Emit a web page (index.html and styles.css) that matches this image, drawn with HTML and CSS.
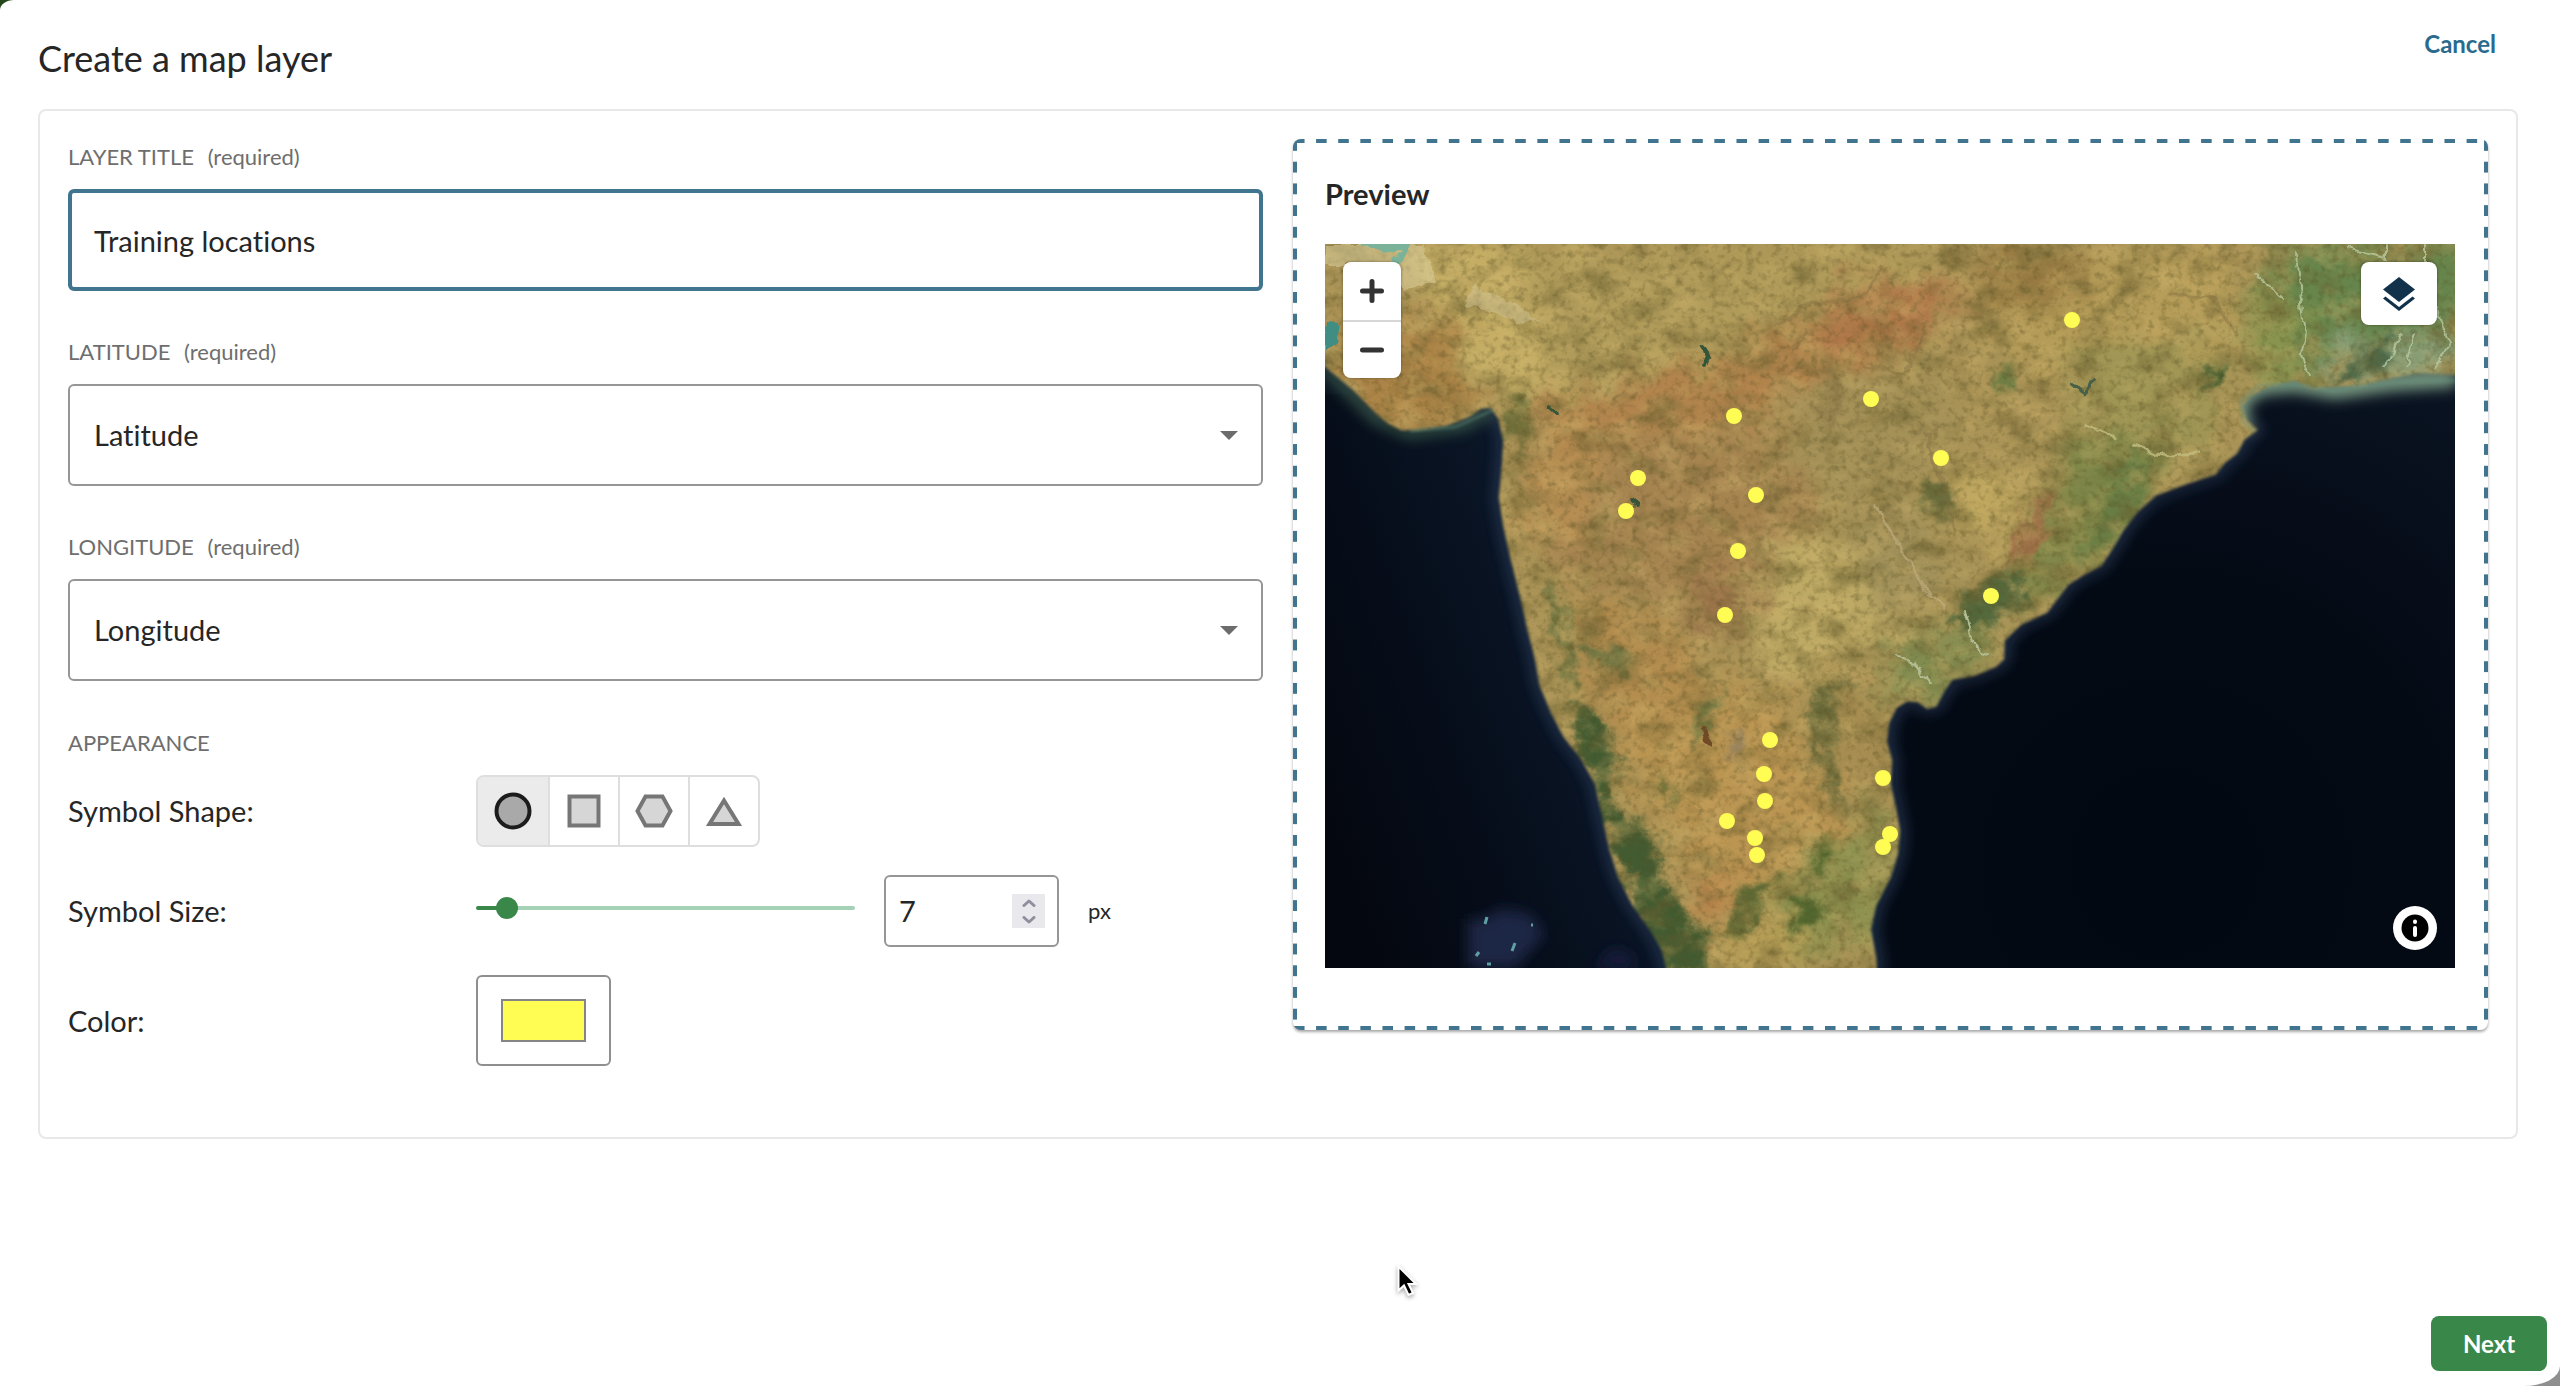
FILE: index.html
```html
<!DOCTYPE html>
<html lang="en">
<head>
<meta charset="utf-8">
<meta name="viewport" content="width=device-width, initial-scale=1">
<title>Create a map layer</title>
<link rel="stylesheet" href="styles.css">
</head>
<body>
<div class="dialog">
  <header class="header">
    <h1 class="title">Create a map layer</h1>
    <a class="cancel" href="#">Cancel</a>
  </header>

  <main class="panel">
    <form class="form" id="layer-form">
      <div class="field">
        <label class="caption" for="layer-title">LAYER TITLE <span class="required">(required)</span></label>
        <input class="control control-active" id="layer-title" type="text" value="Training locations">
      </div>
      <div class="field">
        <label class="caption" for="latitude">LATITUDE <span class="required">(required)</span></label>
        <div class="select-wrap">
          <select class="control" id="latitude"><option>Latitude</option></select>
          <svg class="caret" viewBox="0 0 18 9"><path d="M0 0h18L9 9z"/></svg>
        </div>
      </div>
      <div class="field">
        <label class="caption" for="longitude">LONGITUDE <span class="required">(required)</span></label>
        <div class="select-wrap">
          <select class="control" id="longitude"><option>Longitude</option></select>
          <svg class="caret" viewBox="0 0 18 9"><path d="M0 0h18L9 9z"/></svg>
        </div>
      </div>

      <section class="appearance">
        <h2 class="caption">APPEARANCE</h2>
        <div class="row" role="radiogroup" aria-labelledby="shape-label">
          <span class="row-label" id="shape-label">Symbol Shape:</span>
          <div class="shapes">
            <label class="shape"><input type="radio" name="shape" aria-label="Circle" checked>
              <svg viewBox="0 0 40 40"><circle cx="20" cy="20" r="16.5"/></svg></label>
            <label class="shape"><input type="radio" name="shape" aria-label="Square">
              <svg viewBox="0 0 40 40"><path d="M5.500 5.500h29v29h-29z"/></svg></label>
            <label class="shape"><input type="radio" name="shape" aria-label="Hexagon">
              <svg viewBox="0 0 40 40"><path d="M11.500 5.500h17L36.500 20l-8 14.500h-17L3.500 20z"/></svg></label>
            <label class="shape"><input type="radio" name="shape" aria-label="Triangle">
              <svg viewBox="0 0 40 40"><path d="M20 9.500L34.500 33h-29z"/></svg></label>
          </div>
        </div>
        <div class="row">
          <label class="row-label" for="size">Symbol Size:</label>
          <input class="slider" id="size" type="range" min="1" max="110" value="7">
          <div class="number">
            <input class="number-input" type="number" value="7" aria-label="Symbol size in pixels">
            <div class="spinner">
              <button class="step" type="button" aria-label="Increase"><svg viewBox="0 0 14 8"><path d="M2 6.500L7 2l5 4.500"/></svg></button>
              <button class="step" type="button" aria-label="Decrease"><svg viewBox="0 0 14 8"><path d="M2 1.500L7 6l5-4.500"/></svg></button>
            </div>
          </div>
          <span class="unit">px</span>
        </div>
        <div class="row">
          <label class="row-label" for="color">Color:</label>
          <input class="color" id="color" type="color" value="#fffc54">
        </div>
      </section>
    </form>

    <section class="preview">
      <h2 class="preview-title">Preview</h2>
      <div class="map">
        <svg class="map-art" viewBox="0 0 1130 724" preserveAspectRatio="xMidYMid slice" role="img" aria-label="Satellite map of India">
          <defs>
            <path id="land" transform="translate(-5 -4) scale(.72705 .46882)" d="M-30 -20V215L8 272L45 320L64 350L80 375L95 393L112 406L135 406L175 396L205 378L222 360L234 358L245 380L252 430L250 480L246 550L252 610L262 680L275 760L285 830L295 890L302 950L318 1010L335 1060L360 1110L378 1160L388 1230L398 1300L410 1360L430 1420L455 1475L470 1515L482 1590H767L765 1530L758 1470L765 1420L785 1360L795 1310L798 1260L792 1210L785 1160L787 1110L780 1070L783 1030L793 998L808 984L822 986L835 1000L848 995L858 965L870 938L900 930L930 910L941 895L942 855L965 820L1000 795L1015 765L1030 735L1050 715L1075 695L1092 655L1105 620L1125 580L1150 545L1190 522L1232 500L1245 475L1262 455L1272 425L1290 405L1275 385L1268 355L1280 332L1300 315L1340 300L1365 318L1400 312L1430 312L1470 296L1510 284L1600 290V-20z"/>
            <mask id="land-mask"><use href="#land" fill="#fff" filter="url(#soft)"/></mask>
            <filter id="soft" x="-10%" y="-10%" width="120%" height="120%"><feGaussianBlur stdDeviation="1.500"/></filter>
            <filter id="glow" x="-10%" y="-10%" width="120%" height="120%"><feGaussianBlur stdDeviation="7"/></filter>
            <filter id="patch" x="-50%" y="-50%" width="200%" height="200%" color-interpolation-filters="sRGB">
              <feGaussianBlur stdDeviation="14" result="b"/>
              <feTurbulence type="fractalNoise" baseFrequency=".03" numOctaves="5" seed="4" result="n"/>
              <feDisplacementMap in="b" in2="n" scale="60" xChannelSelector="R" yChannelSelector="G"/>
            </filter>
            <filter id="forest" x="-50%" y="-50%" width="200%" height="200%" color-interpolation-filters="sRGB">
              <feGaussianBlur stdDeviation="4" result="b"/>
              <feTurbulence type="fractalNoise" baseFrequency=".05" numOctaves="5" seed="11" result="n"/>
              <feDisplacementMap in="b" in2="n" scale="34" xChannelSelector="R" yChannelSelector="G"/>
            </filter>
            <filter id="dark-noise" x="0" y="0" width="100%" height="100%" color-interpolation-filters="sRGB">
              <feTurbulence type="fractalNoise" baseFrequency=".028 .038" numOctaves="6" seed="8"/>
              <feColorMatrix values="0 0 0 0 .42  0 0 0 0 .38  0 0 0 0 .19  2.600 0 0 0 -1.200"/>
            </filter>
            <filter id="light-noise" x="0" y="0" width="100%" height="100%" color-interpolation-filters="sRGB">
              <feTurbulence type="fractalNoise" baseFrequency=".03 .04" numOctaves="6" seed="23"/>
              <feColorMatrix values="0 0 0 0 .82  0 0 0 0 .71  0 0 0 0 .43  0 2.600 0 0 -1.200"/>
            </filter>
            <filter id="fine-noise" x="0" y="0" width="100%" height="100%" color-interpolation-filters="sRGB">
              <feTurbulence type="fractalNoise" baseFrequency=".14" numOctaves="4" seed="31"/>
              <feColorMatrix values="0 0 0 0 .32  0 0 0 0 .29  0 0 0 0 .12  0 0 2.600 0 -1.250"/>
            </filter>
            <filter id="wiggle" x="-20%" y="-20%" width="140%" height="140%">
              <feTurbulence type="fractalNoise" baseFrequency=".06" numOctaves="3" seed="2" result="n"/>
              <feDisplacementMap in="SourceGraphic" in2="n" scale="12" xChannelSelector="R" yChannelSelector="G"/>
            </filter>
            <radialGradient id="east-sea" gradientUnits="userSpaceOnUse" cx="840" cy="620" r="560">
              <stop offset="0" stop-color="#020812"/><stop offset=".5" stop-color="#040a14"/><stop offset="1" stop-color="#0a1322"/>
            </radialGradient>
            <linearGradient id="west-sea" gradientUnits="userSpaceOnUse" x1="0" y1="600" x2="270" y2="500">
              <stop offset="0" stop-color="#04070f"/><stop offset=".5" stop-color="#060d19"/><stop offset="1" stop-color="#0a1526"/>
            </linearGradient>
          </defs>

          <rect width="1130" height="724" fill="url(#east-sea)"/>
          <path d="M0 150H500V724H0z" fill="url(#west-sea)"/>
          <g filter="url(#glow)">
            <use href="#land" fill="none" stroke="#22324b" stroke-width="16"/>
            <path d="M1130 134L1065 138L1010 146L970 139L935 142L912 158L916 184" fill="none" stroke="#7c9c84" stroke-width="18"/>
            <path d="M0 125L50 175L85 190L140 182L168 165" fill="none" stroke="#3b5c46" stroke-width="8"/>
            <path d="M143 724V675H160L175 665L205 670L220 690L190 724z" fill="#1b2645"/>
            <path d="M270 724L285 705L305 708L312 724z" fill="#161f3a"/>
          </g>
          <path d="M160 680l2-7M151 712l3-4M187 707l3-8M162 720l4 0M206 681l2 0" stroke="#5fa0a4" stroke-width="3"/>

          <g mask="url(#land-mask)">
            <rect width="1130" height="724" fill="#ab9457"/>
            <g filter="url(#patch)">
              <path d="M30 0H250L230 160L160 140L120 60z" fill="#c5ae65"/>
              <path d="M20 80L130 75L150 170L60 200L0 140z" fill="#ac8447"/>
              <path d="M180 0H620V90L420 110L240 140z" fill="#b09b5a"/>
              <path d="M190 170L300 140L420 110L520 60L600 40L650 60L560 110L440 170L250 200z" fill="#b2834c"/>
              <path d="M480 70L590 35L640 55L600 95L500 100z" fill="#b07648"/>
              <path d="M190 210L420 180L500 230L440 400L300 340L220 320z" fill="#a68450"/>
              <path d="M210 200L290 180L260 280L200 300z" fill="#b88f53"/>
              <path d="M380 330L430 330L430 380L350 380z" fill="#987048"/>
              <path d="M450 150L600 120L640 180L560 300L480 250z" fill="#a49158"/>
              <path d="M640 20L900 10L910 110L700 130z" fill="#b69d59"/>
              <path d="M640 5L760 5L750 60L660 70z" fill="#997c43"/>
              <path d="M740 100L900 100L880 220L760 200z" fill="#a09655"/>
              <path d="M940 0H1140V130H950z" fill="#66854c"/>
              <path d="M920 40H980V140H925z" fill="#87944f"/>
              <path d="M1010 90H1140V134H990z" fill="#8aa07a"/>
              <path d="M620 220L700 230L700 300L640 290z" fill="#c0a860"/>
              <path d="M730 200L850 190L800 290L700 370L690 330L740 260z" fill="#7c8648"/>
              <path d="M440 290L520 300L580 390L480 440L420 400z" fill="#beaa65"/>
              <path d="M560 400L660 380L680 410L600 460L560 440z" fill="#7f8c50"/>
              <path d="M520 300L600 270L640 350L560 380z" fill="#a1915a"/>
              <path d="M240 340L330 370L400 440L380 540L320 540L260 440z" fill="#b28b4e"/>
              <path d="M300 470L450 450L520 560L470 700L380 640L310 540z" fill="#bb9552"/>
              <path d="M480 430L560 450L570 560L500 540z" fill="#a78d51"/>
              <path d="M490 600L575 560L560 690L460 724L440 660z" fill="#8e9250"/>
              <path d="M360 640L400 620L400 680L370 690z" fill="#b9824a"/>
              <path d="M390 690L470 680L480 724H390z" fill="#b9a057"/>
            </g>
            <g filter="url(#forest)">
              <path d="M240 460L270 465L295 520L280 560L330 590L345 660L385 690L380 730L330 730L300 640L270 550z" fill="#435b31"/>
              <path d="M222 330L238 360L250 440L240 440z" fill="#6a7340"/>
              <path d="M700 340L670 330L640 350L620 380L650 385L710 355z" fill="#53683c"/>
              <path d="M595 235L625 235L632 280L610 275L595 262z" fill="#6a6d3d"/>
              <path d="M782 230L820 200L815 270L760 320L745 320L780 270z" fill="#687d44"/>
              <path d="M715 250L725 250L715 300L680 330L690 295z" fill="#9d6f47"/>
              <path d="M880 122L898 118L895 135L880 148z" fill="#3f5d31"/>
              <path d="M185 150L210 150L195 215L180 180z" fill="#74763f"/>
              <path d="M485 450L535 435L505 460L502 505L515 550L530 575L500 545L492 500z" fill="#656839"/>
              <path d="M515 475L510 520L516 540L510 500z" fill="#5a6636"/>
              <path d="M420 645L450 635L430 680L405 700L410 660z" fill="#5d6a35"/>
              <path d="M480 610L510 590L490 640L500 670L470 690L465 660L490 630z" fill="#52672f"/>
              <path d="M378 460L400 440L385 480L370 500z" fill="#6c7d47"/>
              <path d="M250 395L310 415L300 430L260 415z" fill="#6f7442"/>
              <path d="M400 480L420 500L412 525L402 490z" fill="#938160"/>
              <path d="M1030 110L1062 90L1068 125L1040 130L1000 138z" fill="#4d6a4a"/>
              <path d="M670 120L690 125L690 150L672 145z" fill="#6e7d44"/>
              <path d="M335 530L350 545L345 555L335 545z" fill="#62733b"/>
              <path d="M505 120L512 150L505 190L495 160z" fill="#8a7747"/>
              <path d="M550 50L580 150L560 90z" fill="#806d3e"/>
            </g>
            <rect width="1130" height="724" filter="url(#dark-noise)" opacity=".6"/>
            <rect width="1130" height="724" filter="url(#light-noise)" opacity=".4"/>
            <rect width="1130" height="724" filter="url(#fine-noise)" opacity=".35"/>
            <g filter="url(#wiggle)" fill="none" stroke-linecap="round">
              <path d="M0 0H100L110 40L80 45L60 20H0z" fill="#e0d6a4" opacity=".5"/>
              <path d="M150 40L215 75L200 78L140 60z" fill="#d2c493" opacity=".5"/>
              <path d="M40 0L80 2L70 18" stroke="#7ab39a" stroke-width="7"/>
              <path d="M0 75L14 82L12 100L0 108" fill="#3f8d84"/>
              <path d="M550 262L580 310L605 355L620 362" stroke="#c4b183" stroke-width="3" opacity=".6"/>
              <path d="M640 370L648 395L655 408L665 410M570 414L592 418L602 440" stroke="#b4bd92" stroke-width="2"/>
              <path d="M810 200L830 208L850 210L872 208M760 180L790 195" stroke="#c3bd80" stroke-width="3" opacity=".8"/>
              <path d="M970 10L980 90L976 110L985 130M930 30L960 55M1020 5L1060 14L1060 2M1100 0V20M1075 90L1060 125M1110 60L1125 100L1110 124M1090 90L1082 124" stroke="#b9c9a1" stroke-width="2" opacity=".8"/>
              <path d="M450 80L490 60L540 50L560 20M600 190L615 230L630 290M850 50L890 55L910 90M480 90L465 105M540 120L580 130L600 80" stroke="#806b3e" stroke-width="3" opacity=".4"/>
              <path d="M375 100L383 112L380 122M225 164L232 170M305 254L314 262" stroke="#34543a" stroke-width="4"/>
              <path d="M748 140L758 148L770 138" stroke="#46604a" stroke-width="4"/>
              <path d="M378 486L385 500" stroke="#704a26" stroke-width="6"/>
            </g>
          </g>
          <path d="M1130 137L1065 138L1008 147L970 140L935 141L916 157L918 178L930 187M168 166L130 183L85 187" fill="none" stroke="#67937f" stroke-width="3" filter="url(#soft)" opacity=".45"/>

          <g fill="#fffc54">
            <circle cx="313" cy="234" r="8"/><circle cx="301" cy="267" r="8"/><circle cx="409" cy="172" r="8"/>
            <circle cx="546" cy="155" r="8"/><circle cx="747" cy="76" r="8"/><circle cx="616" cy="214" r="8"/>
            <circle cx="431" cy="251" r="8"/><circle cx="413" cy="307" r="8"/><circle cx="400" cy="371" r="8"/>
            <circle cx="666" cy="352" r="8"/><circle cx="445" cy="496" r="8"/><circle cx="439" cy="530" r="8"/>
            <circle cx="440" cy="557" r="8"/><circle cx="558" cy="534" r="8"/><circle cx="402" cy="577" r="8"/>
            <circle cx="430" cy="594" r="8"/><circle cx="432" cy="611" r="8"/><circle cx="565" cy="590" r="8"/>
            <circle cx="558" cy="603" r="8"/>
          </g>
        </svg>
        <div class="zoom">
          <button class="zoom-button" type="button" aria-label="Zoom in"><svg viewBox="0 0 24 24"><path d="M12 2.500v19M2.500 12h19"/></svg></button>
          <button class="zoom-button" type="button" aria-label="Zoom out"><svg viewBox="0 0 24 24"><path d="M2.500 12h19"/></svg></button>
        </div>
        <button class="layers" type="button" aria-label="Layers">
          <svg viewBox="0 0 34 36"><path d="M17 1l16 12.500L17 26 1 13.500z"/><path d="M3.500 20.500L17 31l13.500-10.500L33 22.500 17 35 1 22.500z"/></svg>
        </button>
        <button class="info" type="button" aria-label="Attribution">
          <svg viewBox="0 0 44 44"><circle cx="22" cy="22" r="13.500"/><path d="M22 15.500v.5M22 22v7"/></svg>
        </button>
      </div>
    </section>
  </main>

  <footer class="footer">
    <button class="next" type="submit" form="layer-form">Next</button>
  </footer>
  <svg class="cursor" viewBox="0 0 20 32"><path d="M1.500 1.500v24l5.500-5 4.500 9.500 4.500-2-4.500-9H19z"/></svg>
</div>
</body>
</html>
```
FILE: styles.css
```css
* { box-sizing: border-box; }

html { background: linear-gradient(135deg, #23471b 50%, #8f8f8f 50%); }

body {
  margin: 0;
  font-family: Lato, "Liberation Sans", sans-serif;
  font-size: 29px;
  line-height: 36px;
  font-variant-ligatures: none;
  color: #262626;
}

h1, h2 { margin: 0; font-weight: 400; }
input, select, button { font: inherit; font-variant-ligatures: none; color: inherit; margin: 0; }
svg { display: block; }

.dialog {
  position: relative;
  display: flex;
  flex-direction: column;
  min-height: 100vh;
  background: #fff;
  border-radius: 14px 0 36px 0 / 10px 0 20px 0;
}

.header {
  display: flex;
  justify-content: space-between;
  align-items: flex-start;
  padding: 28px 64px 29px 38px;
}
.title { font-size: 36px; line-height: 44px; padding-top: 8px; }
.cancel {
  font-size: 24px;
  line-height: 32px;
  font-weight: 700;
  color: #2a6a8e;
  text-decoration: none;
}

.panel {
  display: grid;
  grid-template-columns: 1fr 1fr;
  gap: 30px;
  align-items: start;
  margin: 0 42px 0 38px;
  padding: 28px 28px 71px;
  border: 2px solid #e8e8e8;
  border-radius: 8px;
}

.form { display: flex; flex-direction: column; gap: 48px; padding-top: 4px; min-width: 0; }
.field { display: flex; flex-direction: column; gap: 18px; }
.field + .field { margin-top: -1px; }
.caption { font-size: 22px; line-height: 28px; color: #6e6e6e; }
.required { margin-left: 8px; }

.control {
  width: 100%;
  height: 102px;
  padding: 0 24px;
  border: 2px solid #969696;
  border-radius: 6px;
  background: #fff;
  appearance: none;
  outline: none;
}
.control-active { padding: 0 22px; border: 4px solid #41758f; }
.select-wrap { position: relative; }
.caret {
  position: absolute;
  right: 25px;
  top: 47px;
  width: 18px;
  height: 9px;
  fill: #6c6c6c;
  pointer-events: none;
}

.appearance { display: flex; flex-direction: column; gap: 28px; }
.appearance .caption { margin-bottom: -10px; }
.row { display: flex; align-items: center; }
.row-label { width: 408px; }

.shapes {
  display: flex;
  border: 2px solid #dedede;
  border-radius: 8px;
  overflow: hidden;
}
.shape {
  position: relative;
  display: grid;
  place-items: center;
  width: 70px;
  height: 68px;
  border-left: 2px solid #dedede;
}
.shape:first-child { border-left: 0; }
.shape:has(:checked) { background: #ebebeb; }
.shape input { position: absolute; inset: 0; opacity: 0; }
.shape svg { width: 40px; height: 40px; fill: #d6d6d6; stroke: #767676; stroke-width: 4; }
.shape input:checked + svg { fill: #a9a9a9; stroke: #1c1c1c; stroke-width: 4; }

.slider {
  width: 379px;
  height: 22px;
  padding-bottom: 6px;
  box-sizing: content-box;
  appearance: none;
  background: none;
}
.slider::-webkit-slider-runnable-track {
  height: 4px;
  border-radius: 2px;
  background: linear-gradient(90deg, #3a874a 30px, #a5d2b6 30px);
}
.slider::-webkit-slider-thumb {
  appearance: none;
  width: 22px;
  height: 22px;
  margin-top: -9px;
  border-radius: 50%;
  background: #3a874a;
}

.number {
  display: flex;
  align-items: center;
  width: 175px;
  height: 72px;
  margin-left: 29px;
  padding: 0 12px 0 13px;
  border: 2px solid #969696;
  border-radius: 6px;
}
.number-input {
  flex: 1;
  min-width: 0;
  padding: 0;
  border: 0;
  background: none;
  appearance: textfield;
  outline: none;
}
.number-input::-webkit-inner-spin-button { appearance: none; margin: 0; }
.spinner { width: 33px; background: #e9e9ed; }
.step {
  display: grid;
  place-items: center;
  width: 33px;
  height: 17px;
  padding: 0;
  border: 0;
  background: none;
}
.step svg { width: 14px; height: 8px; fill: none; stroke: #8f8f9d; stroke-width: 3; stroke-linecap: round; stroke-linejoin: round; }
.unit { margin-left: 29px; font-size: 22px; line-height: 28px; }

.color {
  width: 135px;
  height: 91px;
  padding: 22px 23px;
  border: 2px solid #8f8f8f;
  border-radius: 6px;
  background: #fff;
  appearance: none;
}
.color::-webkit-color-swatch-wrapper { padding: 0; }
.color::-webkit-color-swatch { border: 2px solid #858585; border-radius: 0; }

.preview {
  --dash: #41758f;
  min-width: 0;
  padding: 37px 33px 62px 32px;
  border-radius: 8px;
  background:
    linear-gradient(90deg, transparent 1px, var(--dash) 1px 12px, transparent 12px) 0 0 / 22px 4px round no-repeat,
    linear-gradient(90deg, transparent 1px, var(--dash) 1px 12px, transparent 12px) 0 100% / 22px 4px round no-repeat,
    linear-gradient(transparent 1px, var(--dash) 1px 12px, transparent 12px) 0 0 / 4px 22px no-repeat round,
    linear-gradient(transparent 1px, var(--dash) 1px 12px, transparent 12px) 100% 0 / 4px 22px no-repeat round,
    #fff;
  box-shadow: 0 2px 3px rgba(0, 0, 0, .35);
}
.preview-title { font-size: 29px; line-height: 36px; font-weight: 700; margin-bottom: 32px; }

.map { position: relative; aspect-ratio: 1130 / 724; overflow: hidden; background: #060c18; }
.map-art { width: 100%; height: 100%; }
.map button { display: grid; place-items: center; padding: 0; border: 0; background: #fff; }

.zoom {
  position: absolute;
  left: 18px;
  top: 18px;
  width: 58px;
  border-radius: 8px;
  overflow: hidden;
  box-shadow: 0 0 3px rgba(0, 0, 0, .4);
}
.map .zoom-button { width: 58px; height: 58px; }
.map .zoom-button + .zoom-button { border-top: 2px solid #d6d6d6; }
.zoom-button svg { width: 24px; height: 24px; fill: none; stroke: #333; stroke-width: 5; stroke-linecap: round; }

.map .layers {
  position: absolute;
  right: 18px;
  top: 18px;
  width: 76px;
  height: 63px;
  border-radius: 8px;
  box-shadow: 0 0 3px rgba(0, 0, 0, .4);
}
.layers svg { width: 34px; height: 36px; fill: #12324c; }

.map .info {
  position: absolute;
  right: 18px;
  bottom: 18px;
  width: 44px;
  height: 44px;
  border-radius: 50%;
}
.info svg { width: 44px; height: 44px; fill: #000; }
.info path { stroke: #fff; stroke-width: 4; stroke-linecap: round; }

.footer { display: flex; justify-content: flex-end; margin-top: auto; padding: 0 13px 15px; }
.next {
  width: 116px;
  height: 55px;
  padding: 0;
  border: 0;
  border-radius: 8px;
  background: #3a874a;
  color: #fff;
  font-size: 24px;
  line-height: 32px;
  font-weight: 700;
}

.cursor {
  position: absolute;
  left: 1397px;
  top: 1265px;
  width: 20px;
  height: 32px;
  stroke: #fff;
  stroke-width: 2;
  overflow: visible;
  filter: drop-shadow(0 2px 2px rgba(0, 0, 0, .35));
  pointer-events: none;
}
```
